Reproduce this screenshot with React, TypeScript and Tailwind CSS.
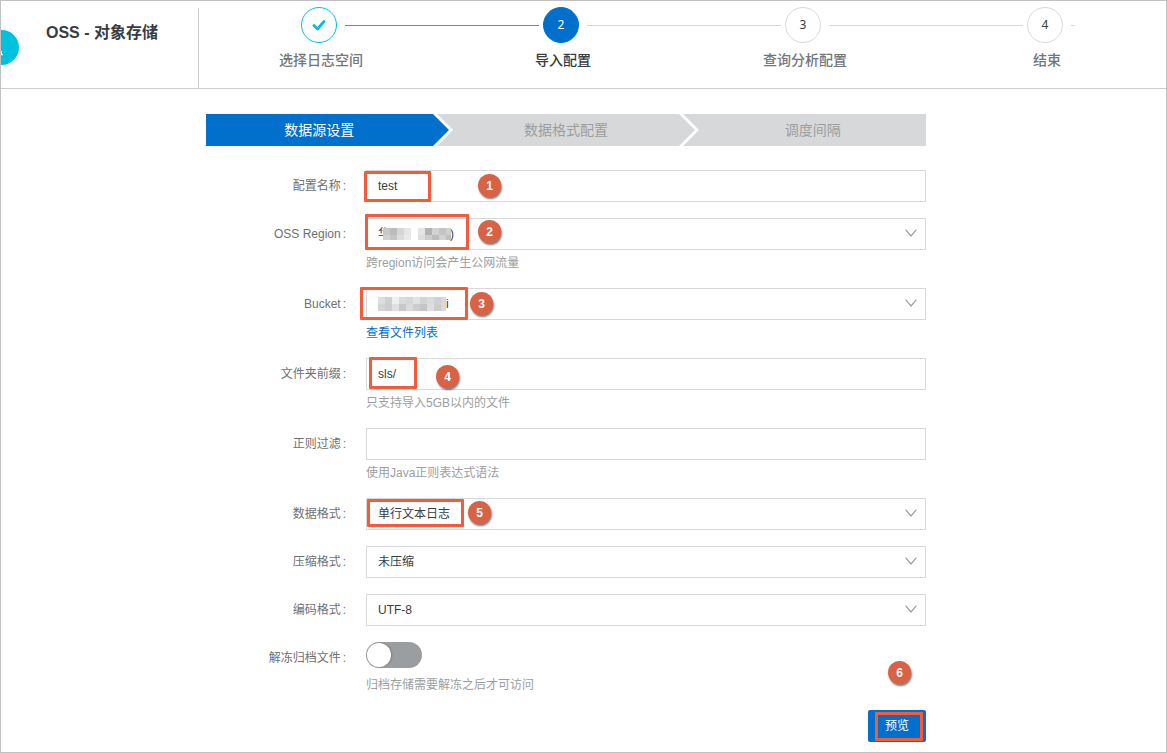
import React from 'react';
import clsx from 'clsx';

const steps = ['选择日志空间', '导入配置', '查询分析配置', '结束'];
const stages = ['数据源设置', '数据格式配置', '调度间隔'];

const Chevron = () => (
  <svg className="pointer-events-none absolute top-[11px] right-[9px] h-2 w-3" viewBox="0 0 12 8" fill="none" stroke="#9b9ea0" strokeWidth="1.2">
    <path d="M0.6 0.6 L6 7 L11.4 0.6" />
  </svg>
);

// red frame around a highlighted value
const Frame = ({ className }: { className: string }) => (
  <span className={clsx('pointer-events-none absolute rounded-[1px] border-[3px] border-[#f25c38]', className)} />
);

const Badge = ({ n, className }: { n: number; className: string }) => (
  <span
    className={clsx(
      'pointer-events-none absolute flex size-[23px] items-center justify-center rounded-full bg-[#d96245] text-xs font-bold text-white shadow-[1px_2px_2px_rgba(0,0,0,0.5)]',
      className,
    )}
  >
    {n}
  </span>
);

// blurred-out value, 7px blocks in two rows
const Mosaic = ({ rows, className }: { rows: string[][]; className: string }) => (
  <svg className={clsx('pointer-events-none absolute', className)} shapeRendering="crispEdges">
    {rows.map((row, y) =>
      row.map((color, x) => <rect key={`${x}-${y}`} x={x * 7} y={y * 7} width="7" height="7" fill={color} />),
    )}
  </svg>
);

type FieldProps = { id: string; label: string; hint?: React.ReactNode; children: React.ReactNode };

const Field = ({ id, label, hint, children }: FieldProps) => (
  <div className="flex">
    <label htmlFor={id} className="h-8 w-40 shrink-0 pr-5 text-right leading-8 text-[#6d7072]">
      {label}<span className="ml-0.5">:</span>
    </label>
    <div className="min-w-0 flex-1">
      <div className="relative min-h-[30px]">{children}</div>
      {hint && <div className="h-[22px] pt-0.5 leading-[22px] text-[#9b9ea0]">{hint}</div>}
    </div>
  </div>
);

const control = 'block h-8 w-full appearance-none border border-[#d7d8d9] bg-white px-[11px] text-xs text-[#373d41] outline-none';

const Steps = () => (
  <ol className="flex flex-1 pt-1.5 pr-[77px] pl-20">
    {steps.map((name, i) => {
      const last = i === steps.length - 1;
      return (
        <li key={name} className={last ? 'flex-none' : 'min-w-0 flex-1'}>
          <div className={clsx('flex items-center gap-2 pl-[22px]', !last && '-mr-[18px]')}>
            <span
              className={clsx(
                'flex size-9 shrink-0 items-center justify-center rounded-full border font-[Noto_Sans] text-xs',
                i === 0 && 'border-[#00c1de] text-[#00c1de]',
                i === 1 && 'border-[#0070cc] bg-[#0070cc] text-white',
                i > 1 && 'border-[#d7d8d9] text-[#373d41]',
              )}
            >
              {i === 0 ? (
                <svg className="h-3 w-[14px]" viewBox="0 0 14 12" fill="none" stroke="currentColor" strokeWidth="2.8" strokeLinecap="round" strokeLinejoin="round">
                  <path d="M2 6.5 L5.5 10 L12 2.5" />
                </svg>
              ) : (
                i + 1
              )}
            </span>
            <span className={clsx('h-px', last ? 'w-1' : 'flex-1', i === 0 ? 'bg-[#00b9d6]' : 'bg-[#d7d8d9]')} />
          </div>
          <div className={clsx('mt-1.5 w-21 text-center text-sm leading-[22px] font-medium', i === 1 ? 'text-[#373d41]' : 'text-[#73777a]')}>
            {name}
          </div>
        </li>
      );
    })}
  </ol>
);

const StageBar = () => (
  <div className="flex h-8 bg-[#d7d8d9] text-sm leading-8">
    {stages.map((name, i) => (
      <React.Fragment key={name}>
        {i > 0 && (
          <svg className="h-8 w-5 shrink-0" viewBox="0 0 20 32">
            <path d="M0 0 H4 L20 16 L4 32 H0 Z" fill="#fff" />
            <path d="M0 0 L16 16 L0 32 Z" fill={i === 1 ? '#0070cc' : '#d7d8d9'} />
          </svg>
        )}
        <div className={clsx('flex-1 text-center', i === 0 ? 'bg-[#0070cc] text-white' : 'text-[#9b9ea0]')}>{name}</div>
      </React.Fragment>
    ))}
  </div>
);

export default function App() {
  return (
    <div className="min-h-screen border border-[#c1c1c1] bg-white font-['Liberation_Sans','Noto_Sans_CJK_SC',sans-serif] text-xs text-[#373d41]">
      <header className="flex h-22 border-b border-[#cccccc]">
        <div className="relative mt-[7px] w-[198px] shrink-0 border-r border-[#cccccc] pl-[45px]">
          <svg className="absolute top-[22px] left-0 h-[35px] w-[18px]" viewBox="0 0 18 35">
            <circle cx="0.5" cy="17.5" r="17.5" fill="#00c1de" />
            <path d="M0 20 L2 25.5 L0 25 Z" fill="#fff" />
          </svg>
          <h1 className="pt-[13px] text-base leading-6 font-bold">OSS - 对象存储</h1>
        </div>
        <Steps />
      </header>

      <main className="pt-[25px] pr-60 pb-2.5 pl-[205px]">
        <StageBar />

        <form className="mt-6 flex flex-col gap-4">
          <Field id="name" label="配置名称">
            <input id="name" type="text" defaultValue="test" className={control} />
            <Frame className="top-px -left-0.5 h-[31px] w-[67px]" />
            <Badge n={1} className="top-1 left-28" />
          </Field>

          <Field id="region" label="OSS Region" hint="跨region访问会产生公网流量">
            <select id="region" className={control} />
            <span className="pointer-events-none absolute top-0 left-3 leading-8">华</span>
            <span className="pointer-events-none absolute top-0 left-21 leading-8">)</span>
            <Mosaic
              className="top-2.5 left-[17px] h-3 w-7"
              rows={[['#c9c9c9', '#bcbcbc', '#d6d6d6', '#e6e6e6'], ['#d2d2d2', '#c6c6c6', '#dcdcdc', '#eaeaea']]}
            />
            <Mosaic
              className="top-2.5 left-[52px] h-3 w-[33px]"
              rows={[
                ['#e4e4e4', '#b2b2b2', '#d2d2d2', '#c4c4c4', '#cfcfcf'],
                ['#dedede', '#cccccc', '#bcbcbc', '#d2d2d2', '#c0c0c0'],
              ]}
            />
            <Chevron />
            <Frame className="-top-1 -left-px h-9 w-[104px]" />
            <Badge n={2} className="top-0.5 left-28" />
          </Field>

          <Field id="bucket" label="Bucket" hint={<a href="#files" className="text-[#0070cc]">查看文件列表</a>}>
            <select id="bucket" className={control} />
            <span className="pointer-events-none absolute top-0 left-20 leading-8">i</span>
            <Mosaic
              className="top-[9px] left-3 h-3.5 w-[68px]"
              rows={[
                ['#dedede', '#d0d0d0', '#f0f0f0', '#dadada', '#d6d6d6', '#e2e2e2', '#d4d4d4', '#dadada', '#d0d0d0', '#d8d8d8'],
                ['#d4d4d4', '#cccccc', '#e0e0e0', '#c8c8c8', '#dadada', '#cccccc', '#c4c4c4', '#dedede', '#cccccc', '#dadada'],
              ]}
            />
            <Chevron />
            <Frame className="-top-px -left-1.5 h-[33px] w-[108px]" />
            <Badge n={3} className="top-1 left-26" />
          </Field>

          <Field id="prefix" label="文件夹前缀" hint="只支持导入5GB以内的文件">
            <input id="prefix" type="text" defaultValue="sls/" className={control} />
            <Frame className="-top-px left-[3px] h-8 w-12" />
            <Badge n={4} className="top-[7px] left-[70px]" />
          </Field>

          <Field id="regex" label="正则过滤" hint="使用Java正则表达式语法">
            <input id="regex" type="text" className={control} />
          </Field>

          <Field id="format" label="数据格式">
            <select id="format" className={control}>
              <option>单行文本日志</option>
            </select>
            <Chevron />
            <Frame className="top-px left-px h-7 w-[97px]" />
            <Badge n={5} className="top-[3px] left-[102px]" />
          </Field>

          <Field id="compress" label="压缩格式">
            <select id="compress" className={control}>
              <option>未压缩</option>
            </select>
            <Chevron />
          </Field>

          <Field id="encoding" label="编码格式">
            <select id="encoding" className={control}>
              <option>UTF-8</option>
            </select>
            <Chevron />
          </Field>

          <Field id="restore" label="解冻归档文件" hint="归档存储需要解冻之后才可访问">
            <input
              id="restore"
              type="checkbox"
              role="switch"
              className="block h-[26px] w-14 appearance-none rounded-full bg-[#9b9ea0] p-px before:block before:size-6 before:rounded-full before:bg-white before:shadow-[1px_0_2px_rgba(0,0,0,0.2)] checked:bg-[#0070cc] checked:before:ml-7.5"
            />
          </Field>

          <div className="flex justify-end">
            <div className="relative">
              <button type="button" className="h-8 w-[58px] rounded-xs bg-[#0070cc] text-xs text-white">
                预览
              </button>
              <Frame className="top-0.5 left-[7px] h-[29px] w-12" />
              <Badge n={6} className="-top-[49px] left-5" />
            </div>
          </div>
        </form>
      </main>
    </div>
  );
}
